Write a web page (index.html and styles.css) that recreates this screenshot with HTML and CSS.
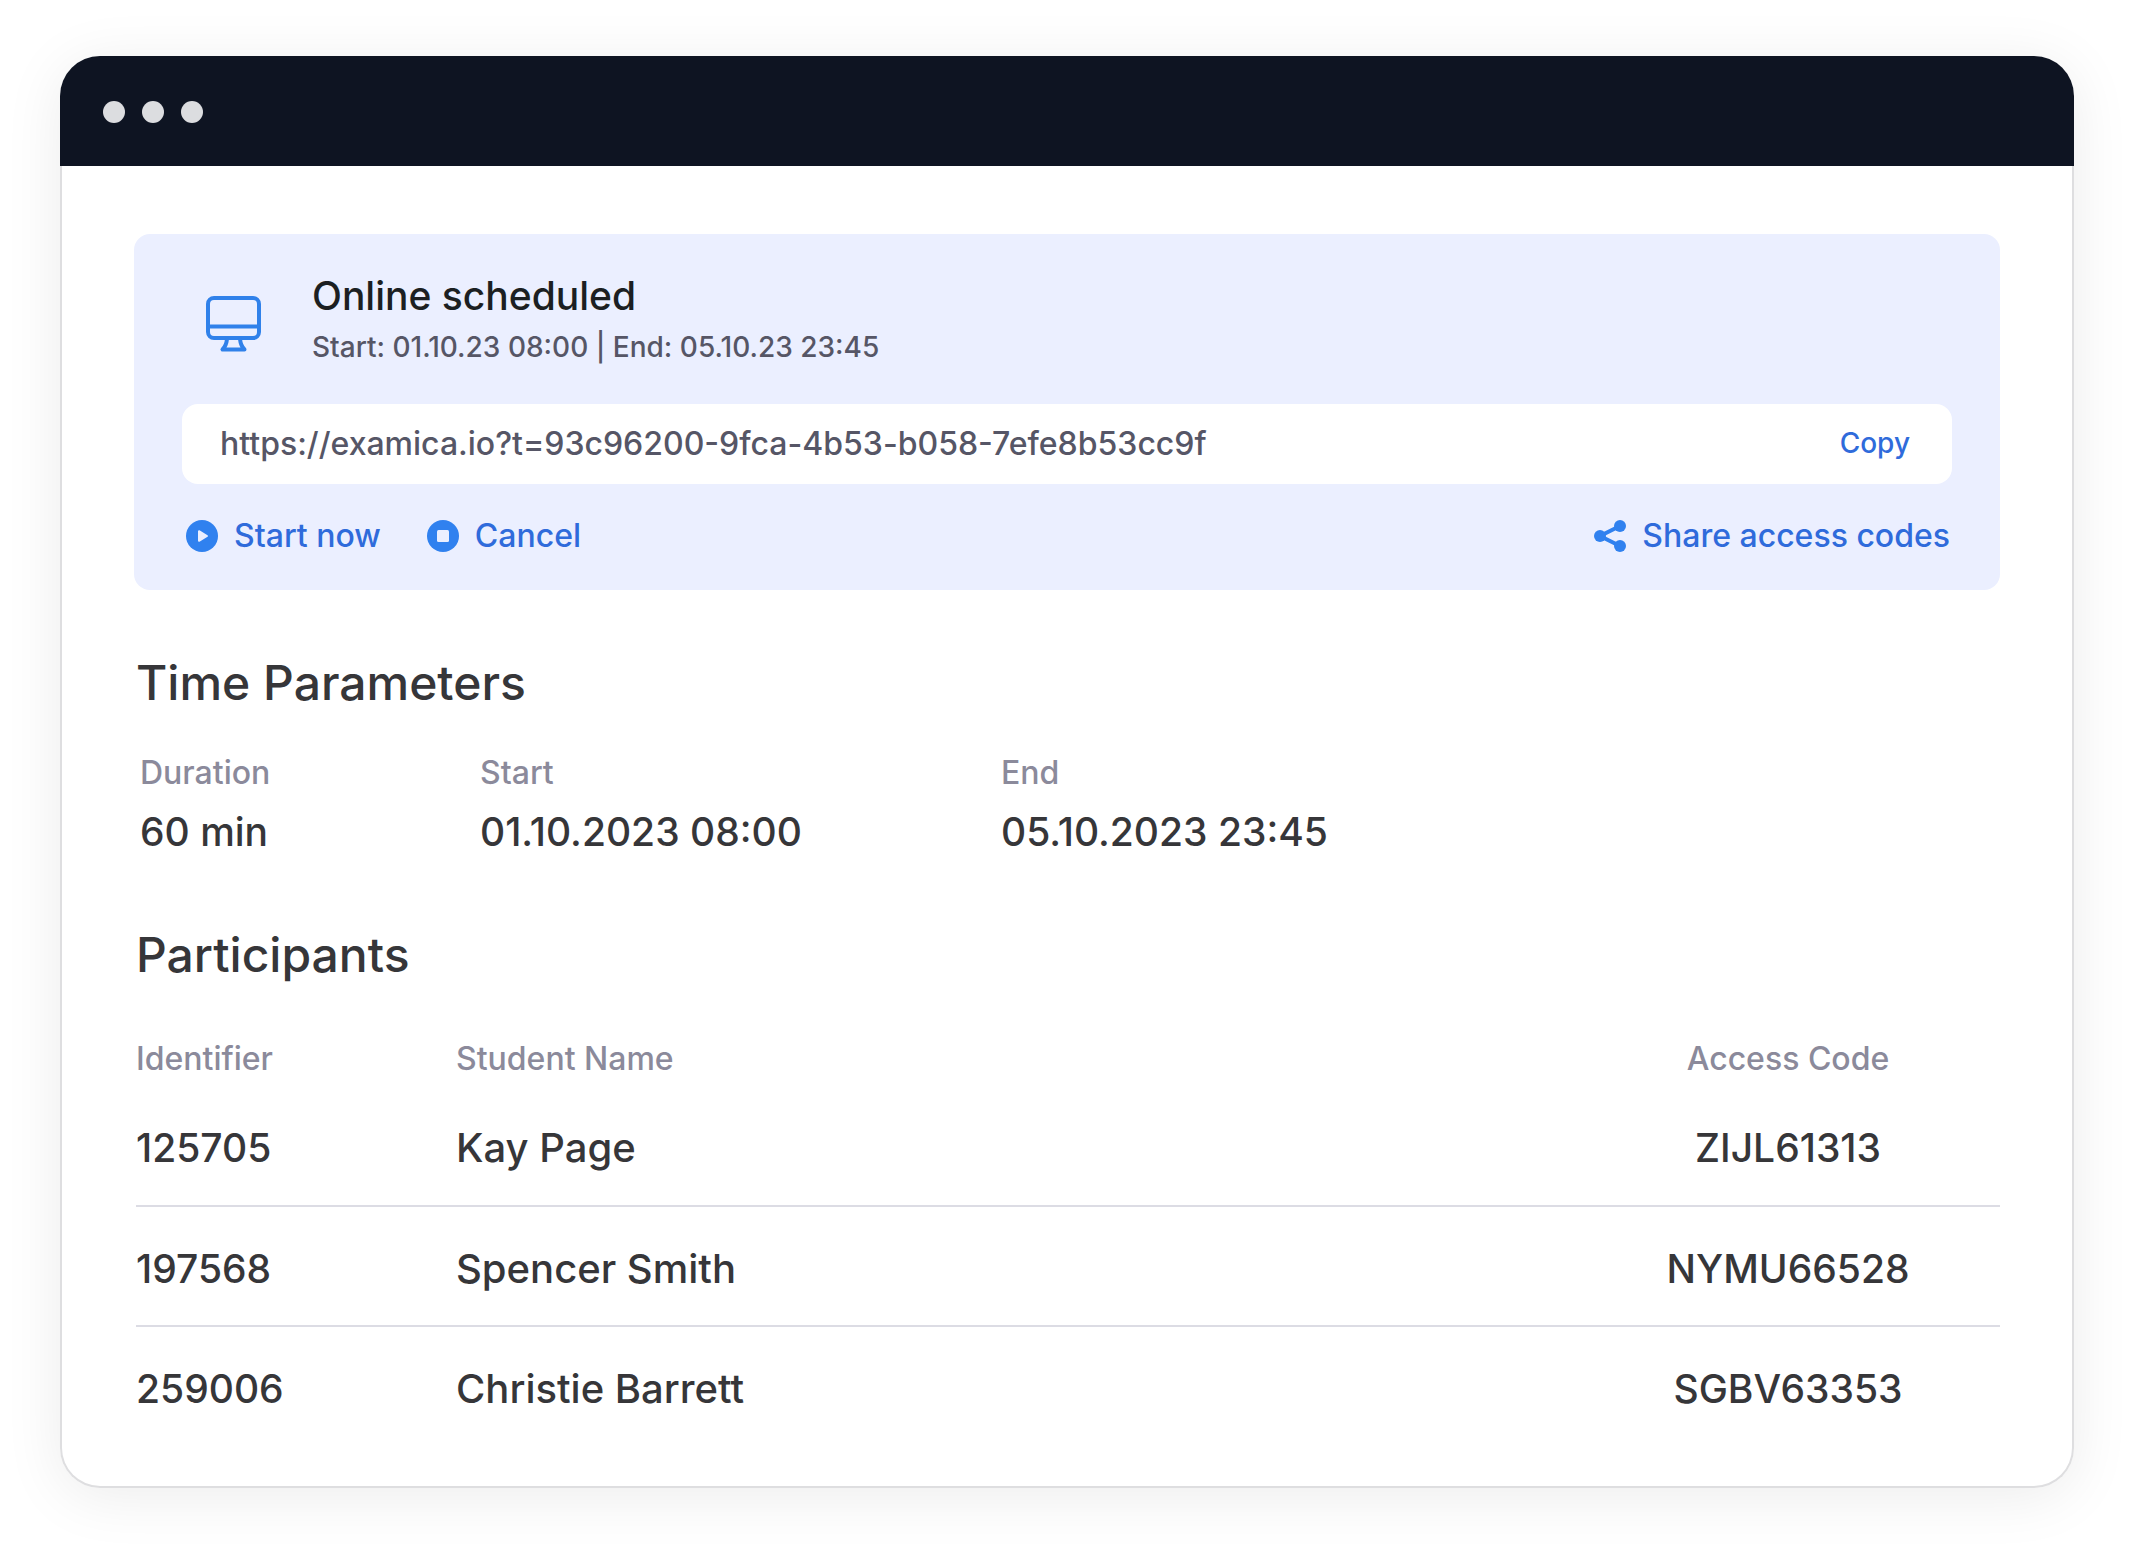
FILE: index.html
```html
<!DOCTYPE html>
<html lang="en">
<head>
<meta charset="utf-8">
<meta name="viewport" content="width=device-width, initial-scale=1">
<title>Online scheduled exam</title>
<link rel="stylesheet" href="styles.css">
</head>
<body>
<main class="window">
  <header class="titlebar">
    <span class="dot"></span>
    <span class="dot"></span>
    <span class="dot"></span>
  </header>
  <div class="content">
    <section class="session">
      <div class="session-head">
        <svg class="monitor" viewBox="0 0 56 56" fill="none" stroke="currentColor" stroke-width="4" stroke-linejoin="round" stroke-linecap="round" aria-hidden="true">
          <rect x="2" y="2" width="51" height="40" rx="6"/>
          <path d="M2 30.500H53" stroke-linecap="butt"/>
          <path d="M21 43C20.500 48 19 51 16.500 53.500H38.500C36 51 34.500 48 34 43"/>
        </svg>
        <div>
          <h1 class="session-title">Online scheduled</h1>
          <p class="session-dates">Start: 01.10.23 08:00 | End: 05.10.23 23:45</p>
        </div>
      </div>
      <div class="link-box">
        <input class="link-input" type="text" readonly aria-label="Exam link" value="https://examica.io?t=93c96200-9fca-4b53-b058-7efe8b53cc9f">
        <button class="copy" type="button">Copy</button>
      </div>
      <div class="actions">
        <button class="action" type="button">
          <svg class="icon" viewBox="0 0 32 32" aria-hidden="true">
            <circle cx="16" cy="16" r="16" fill="currentColor"/>
            <path d="M13 11.200V20.800L21 16Z" fill="#ebefff" stroke="#ebefff" stroke-width="2" stroke-linejoin="round"/>
          </svg>
          <span>Start now</span>
        </button>
        <button class="action" type="button">
          <svg class="icon" viewBox="0 0 32 32" aria-hidden="true">
            <circle cx="16" cy="16" r="16" fill="currentColor"/>
            <rect x="10" y="10" width="12" height="12" rx="1.500" fill="#ebefff"/>
          </svg>
          <span>Cancel</span>
        </button>
        <button class="action action-share" type="button">
          <svg class="icon" viewBox="0 0 32 32" aria-hidden="true">
            <path d="M26 6L6 16L26 26" fill="none" stroke="currentColor" stroke-width="4"/>
            <circle cx="26" cy="6" r="6" fill="currentColor"/>
            <circle cx="6" cy="16" r="6" fill="currentColor"/>
            <circle cx="26" cy="26" r="6" fill="currentColor"/>
          </svg>
          <span>Share access codes</span>
        </button>
      </div>
    </section>

    <h2 class="heading">Time Parameters</h2>
    <dl class="params">
      <div><dt>Duration</dt><dd>60 min</dd></div>
      <div><dt>Start</dt><dd>01.10.2023 08:00</dd></div>
      <div><dt>End</dt><dd>05.10.2023 23:45</dd></div>
    </dl>

    <h2 class="heading">Participants</h2>
    <table class="participants">
      <thead>
        <tr><th scope="col" class="col-id">Identifier</th><th scope="col">Student Name</th><th scope="col" class="col-code">Access Code</th></tr>
      </thead>
      <tbody>
        <tr><td>125705</td><td class="name">Kay Page</td><td class="col-code">ZIJL61313</td></tr>
        <tr><td>197568</td><td class="name">Spencer Smith</td><td class="col-code">NYMU66528</td></tr>
        <tr><td>259006</td><td class="name">Christie Barrett</td><td class="col-code">SGBV63353</td></tr>
      </tbody>
    </table>
  </div>
</main>
</body>
</html>
```
FILE: styles.css
```css
* {
  box-sizing: border-box;
  margin: 0;
  padding: 0;
}

body {
  padding: 56px 61px 64px 60px;
  background: #fff;
  color: #363639;
  font-family: Inter, "Liberation Sans", sans-serif;
  font-weight: 500;
}

.window {
  border-radius: 40px;
  background: #fff;
  box-shadow: 0 8px 60px rgba(0, 0, 0, 0.08);
}

.titlebar {
  display: flex;
  align-items: center;
  gap: 17px;
  height: 110px;
  padding: 2px 43px 0;
  border-radius: 40px 40px 0 0;
  background: #0e1422;
}

.dot {
  width: 22px;
  height: 22px;
  border-radius: 50%;
  background: #dcdde0;
}

.content {
  padding: 68px 72px 40px;
  border: 2px solid #dedee0;
  border-top: 0;
  border-radius: 0 0 40px 40px;
}

.session {
  padding: 36px 48px 34px;
  border-radius: 16px;
  background: #ebefff;
}

.session-head {
  display: flex;
  align-items: flex-end;
  gap: 50px;
  padding-left: 24px;
}

.monitor {
  flex: none;
  width: 56px;
  height: 56px;
  margin-bottom: 20px;
  color: #3081ea;
}

.session-title {
  color: #1c1f22;
  font-size: 39px;
  font-weight: 500;
  line-height: 52px;
}

.session-dates {
  color: #565666;
  font-size: 28px;
  line-height: 50px;
}

.link-box {
  display: flex;
  align-items: center;
  height: 80px;
  margin-top: 32px;
  padding: 0 42px 2px 38px;
  border-radius: 16px;
  background: #fff;
}

.link-input {
  flex: 1;
  min-width: 0;
  border: 0;
  background: transparent;
  color: #565666;
  font: inherit;
  font-size: 32px;
}

button {
  border: 0;
  background: transparent;
  color: #2f6bdb;
  font: inherit;
  cursor: pointer;
}

.copy {
  font-size: 28px;
}

.actions {
  display: flex;
  gap: 46px;
  margin-top: 32px;
  padding: 0 2px 0 4px;
}

.action {
  display: flex;
  align-items: center;
  gap: 16px;
  font-size: 32px;
  line-height: 40px;
}

.action-share {
  margin-left: auto;
}

.icon {
  width: 32px;
  height: 32px;
  color: #3081ef;
}

.heading {
  margin-top: 63px;
  padding-left: 2px;
  font-size: 48px;
  font-weight: 500;
  line-height: 60px;
}

.params {
  display: grid;
  grid-template-columns: 340px 521px 1fr;
  margin-top: 36px;
  padding-left: 6px;
}

.params dt,
.participants th {
  color: #8b8a9b;
  font-size: 32px;
  font-weight: 500;
}

.params dt {
  line-height: 48px;
}

.params dd {
  margin-top: 5px;
  font-size: 39px;
  line-height: 60px;
}

.participants {
  width: calc(100% - 2px);
  margin-top: 45px;
  margin-left: 2px;
  border-collapse: collapse;
  table-layout: fixed;
  text-align: left;
}

.participants th {
  height: 56px;
}

.participants td {
  height: 120px;
  padding-top: 4px;
  border-bottom: 2px solid #dcdce4;
  font-size: 39px;
}

.participants .name {
  font-size: 40px;
}

.participants tr:last-child td {
  border-bottom: 0;
}

.participants .col-id {
  width: 320px;
}

.participants .col-code {
  width: 424px;
  text-align: center;
}
```
